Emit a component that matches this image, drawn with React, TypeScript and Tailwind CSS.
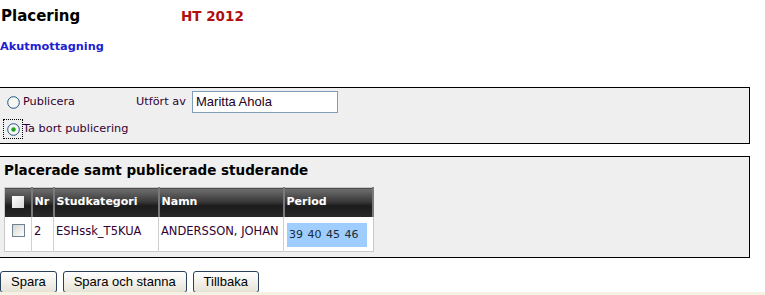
import React from 'react';

const verdana = "font-['DejaVu_Sans',Verdana,sans-serif]";
const arial = "font-['Liberation_Sans',Arial,sans-serif]";

function Radio({ checked, focused }: { checked?: boolean; focused?: boolean }) {
  return (
    <span
      className={`flex h-[18px] w-[18px] items-center justify-center ${
        focused ? 'outline-1 outline-dotted outline-black' : ''
      }`}
    >
      <svg width="13" height="13" viewBox="0 0 13 13">
        <circle cx="6.5" cy="6.5" r="5.8" fill="#f7f7f4" stroke="#1c5180" strokeWidth="1" />
        {checked && <circle cx="6.5" cy="6.5" r="2.2" fill="#21a121" />}
      </svg>
    </span>
  );
}

function Checkbox({ header }: { header?: boolean }) {
  if (header) {
    return <span className="block h-[12px] w-[12px] bg-gradient-to-br from-white to-[#d8d8d8]" />;
  }
  return (
    <span className="block h-[13px] w-[13px] border border-[#6f8294] bg-gradient-to-br from-[#d6d6d0] to-white" />
  );
}

export default function App() {
  const th =
    "h-[29px] border-r-2 border-[#7a7a7a] bg-[linear-gradient(to_bottom,#707070_0%,#3a3a3a_45%,#1c1c1c_60%,#2a2a2a_100%)] px-[2px] text-left align-middle text-[11px] font-bold text-white";
  const td = 'border-r border-[#d0d0d0] px-[2px] pt-[6px] align-top text-[11.5px] text-[#330033]';

  return (
    <div className={`relative h-[295px] w-[765px] overflow-hidden bg-white ${verdana}`}>
      <div className="flex h-[30px] items-start pt-[6px]">
        <span className="w-[181px] pl-[1px] text-[15px] leading-[20px] font-bold text-black">Placering</span>
        <span className="text-[13.5px] leading-[20px] font-bold text-[#b01010]">HT 2012</span>
      </div>
      <div className="h-[57px] pt-[10px] text-[11.3px] leading-[14px] font-bold text-[#1d1dd2]">Akutmottagning</div>

      <div className="h-[57px] w-[750px] border border-l-0 border-black bg-[#efefef]">
        <div className="flex h-[28px] items-center pl-[4px]">
          <Radio />
          <span className="ml-[1px] w-[113px] text-[11.3px] text-[#330033]">Publicera</span>
          <span className="w-[56px] text-[11.3px] text-[#330033]">Utfört av</span>
          <div
            className={`flex h-[22px] w-[146px] items-center border border-[#7f9db9] bg-white px-[3px] text-[13px] text-[#220022] ${arial}`}
          >
            Maritta Ahola
          </div>
        </div>
        <div className="flex h-[26px] items-center pl-[4px]">
          <Radio checked focused />
          <span className="ml-[1px] text-[11.3px] text-[#330033]">Ta bort publicering</span>
        </div>
      </div>

      <div className="mt-[12px] h-[102px] w-[750px] border border-l-0 border-black bg-[#efefef] pl-[4px]">
        <div className="h-[30px] pt-[5px] text-[13.5px] leading-[16px] font-bold text-black">
          Placerade samt publicerade studerande
        </div>
        <table className="w-[370px] table-fixed border-collapse border border-[#c8c8c8] bg-white">
          <thead>
            <tr>
              <th className={`${th} w-[27px] pl-[7px]`}>
                <Checkbox header />
              </th>
              <th className={`${th} w-[22px]`}>Nr</th>
              <th className={`${th} w-[105px]`}>Studkategori</th>
              <th className={`${th} w-[125px]`}>Namn</th>
              <th className={`${th} border-r-0`}>Period</th>
            </tr>
          </thead>
          <tbody>
            <tr className="h-[35px]">
              <td className={`${td} pl-[7px] pt-[7px]`}>
                <Checkbox />
              </td>
              <td className={td}>2</td>
              <td className={td}>ESHssk_T5KUA</td>
              <td className={`${td} whitespace-nowrap`}>ANDERSSON, JOHAN</td>
              <td className="px-[3px] pt-[6px] align-top">
                <div className="h-[24px] w-[80px] bg-[#9fcdfd] pt-[4px] pl-[2px] text-[11px] [word-spacing:1px] whitespace-nowrap text-[#1a2a3a]">
                  39 40 45 46
                </div>
              </td>
            </tr>
          </tbody>
        </table>
      </div>

      <div className={`mt-[13px] flex gap-[6px] ${arial}`}>
        {['Spara', 'Spara och stanna', 'Tillbaka'].map((b) => (
          <button
            key={b}
            className="h-[22px] rounded-[3px] border border-[#2a3f5a] bg-gradient-to-b from-white to-[#e6e3d6] px-[10px] text-[13px] leading-[18px] text-black"
          >
            {b}
          </button>
        ))}
      </div>
      <div className="absolute bottom-0 left-0 h-[3px] w-[765px] bg-[#f6f2e3]" />
    </div>
  );
}
